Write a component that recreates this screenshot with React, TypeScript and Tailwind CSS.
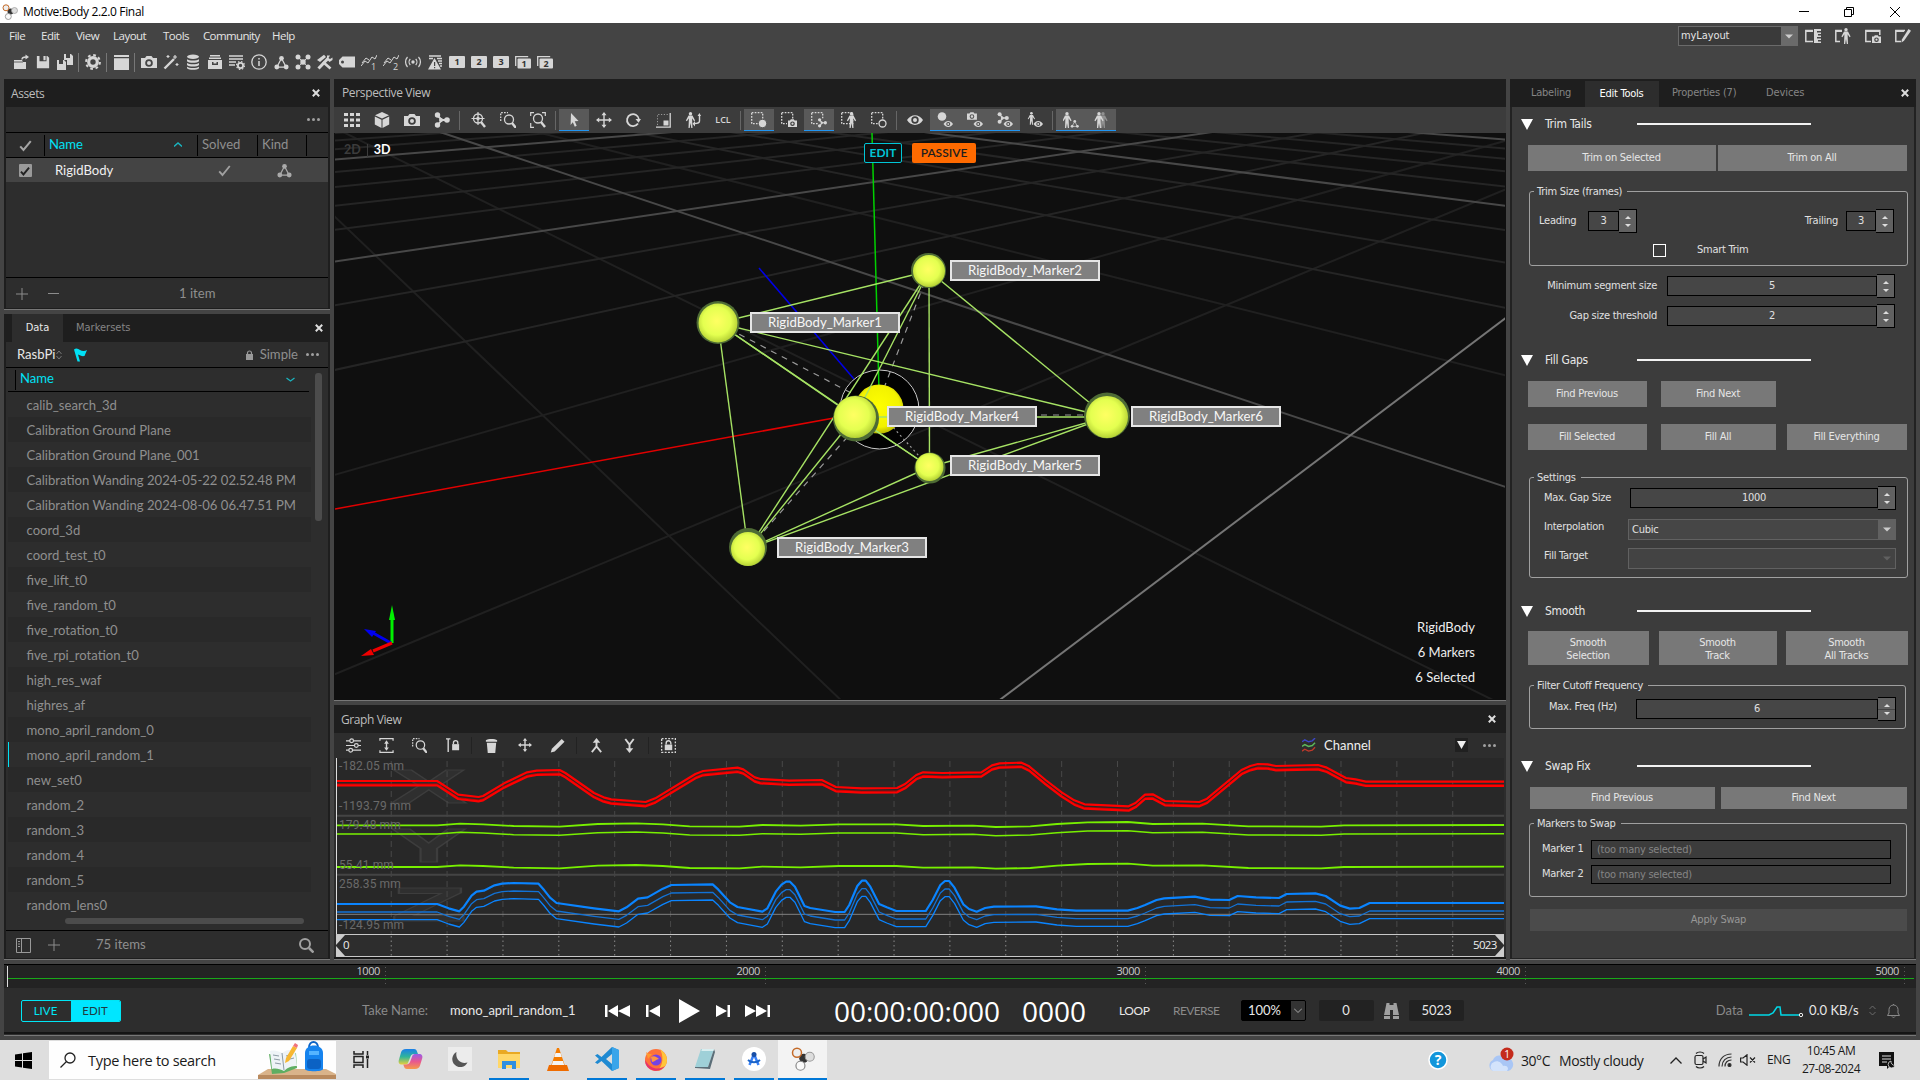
import React from "react";

type Kids = { children?: React.ReactNode };

/* ---------- small helpers ---------- */

function Ic({ children, s = 16, className = "" }: Kids & { s?: number; className?: string }) {
  return (
    <svg width={s} height={s} viewBox="0 0 16 16" fill="none" stroke="none" className={"shrink-0 " + className}>
      {children}
    </svg>
  );
}

const C = "#d6d6d6";

const camera = <path fillRule="evenodd" fill={C} d="M0 4h4l1.5-2h5L12 4h4v10H0zM8 5.2a3.8 3.8 0 1 0 0 7.6 3.8 3.8 0 0 0 0-7.6zm0 1.8a2 2 0 1 1 0 4 2 2 0 0 1 0-4z" />;
const smallCam = <path fillRule="evenodd" fill={C} d="M7 8.500h2l.8-1.200h3L13.600 8.500H16V15H7zM11.500 9.400a2.300 2.300 0 1 0 0 4.600 2.300 2.300 0 0 0 0-4.600zm0 1.200a1.100 1.100 0 1 1 0 2.200 1.100 1.100 0 0 1 0-2.200z" />;
const eyeSm = (
  <g>
    <path fill={C} d="M6.500 12c2.500-4 7-4 9.500 0-2.500 4-7 4-9.500 0z" />
    <circle cx="11.250" cy="12" r="2" fill="#4a4a4a" />
    <circle cx="11.250" cy="12" r="1" fill={C} />
  </g>
);
const man = (
  <g fill={C}>
    <circle cx="8" cy="1.700" r="1.700" />
    <path d="M6 3.600h4l2.600 5-1 .6-2-3 .4 9.800H8.800L8 11l-.8 5H6l.4-9.800-2 3-1-.6z" />
  </g>
);
const dashBox = <path d="M.7.700h11v11h-11z" stroke={C} strokeWidth="1.300" strokeDasharray="1.700 1.300" />;
const rigid = (
  <g>
    <path d="M8 3.500 3 13h10z" stroke={C} strokeWidth="1.300" />
    <circle cx="8" cy="3.500" r="2.500" fill={C} />
    <circle cx="3" cy="12.800" r="2.600" fill={C} />
    <circle cx="13" cy="12.800" r="2.600" fill={C} />
  </g>
);
const pair = (
  <g fill={C}>
    <path d="M3 3l5 5-4.500 5M8 8h5" stroke={C} strokeWidth="1.800" fill="none" />
    <circle cx="3.500" cy="3" r="2.700" />
    <circle cx="3.500" cy="13" r="2.700" />
    <circle cx="13" cy="8" r="2.800" />
    <circle cx="7" cy="8" r="2" />
  </g>
);
const gearPath = (
  <g>
    <circle cx="8" cy="8" r="4.300" stroke={C} strokeWidth="3.200" />
    <circle cx="8" cy="8" r="6.900" stroke={C} strokeWidth="2" strokeDasharray="2.710 2.710" />
  </g>
);

function NumIcon({ n, stack = false }: { n: string; stack?: boolean }) {
  return (
    <Ic>
      {stack && <path d="M.7 12V2.700h12.500" stroke={C} strokeWidth="1.300" />}
      <rect x={stack ? 2.500 : 0} y={stack ? 4.500 : 2} width={stack ? 13.500 : 16} height={stack ? 10 : 12} rx="1" fill={C} />
      <text x={stack ? 9.200 : 8} y={stack ? 12.800 : 11.300} textAnchor="middle" fontSize={9} fontWeight="700" fontFamily="Open Sans" fill="#333">{n}</text>
    </Ic>
  );
}

function Sep({ className = "bg-[#666]" }: { className?: string }) {
  return <div className={"mr-[3px] ml-[2px] h-[19px] w-px shrink-0 " + className} />;
}

function MainTool({ children }: Kids) {
  return <div className="flex w-[22px] shrink-0 items-center justify-center">{children}</div>;
}

function Close() {
  return (
    <svg width="8" height="8" viewBox="0 0 8 8" className="shrink-0">
      <path d="M.8.800l6.400 6.400M7.200.800.8 7.200" stroke="#ddd" strokeWidth="2" />
    </svg>
  );
}

function Dots() {
  return (
    <div className="flex gap-[2px]">
      <i className="size-[3px] rounded-full bg-[#a0a0a0]" />
      <i className="size-[3px] rounded-full bg-[#a0a0a0]" />
      <i className="size-[3px] rounded-full bg-[#a0a0a0]" />
    </div>
  );
}

/* ---------- window chrome ---------- */

function MotiveLogo({ s = 16 }: { s?: number }) {
  return (
    <svg width={s} height={s} viewBox="0 0 16 16">
      <circle cx="8.500" cy="7.500" r="3" fill="#333" />
      <circle cx="4" cy="3.800" r="3" fill="#eee" stroke="#c46a28" strokeWidth="1" />
      <circle cx="12.500" cy="6.500" r="3" fill="#ddd" stroke="#999" strokeWidth=".7" />
      <circle cx="6.300" cy="12.500" r="3" fill="#fafafa" stroke="#888" strokeWidth=".8" />
    </svg>
  );
}

function TitleBar() {
  return (
    <div className="flex h-[23px] shrink-0 items-center bg-white pl-[2px] text-black">
      <MotiveLogo />
      <span className="ml-[5px] text-[12px] tracking-[-0.35px]">Motive:Body 2.2.0 Final</span>
      <div className="ml-auto flex items-center pr-[20px]">
        <i className="mr-[35px] h-px w-[10px] bg-black" />
        <svg width="10" height="10" viewBox="0 0 10 10" fill="none" stroke="#000" className="mr-[36px]">
          <path d="M.5 2.500h7v7h-7zM2.500 2.500v-2h7v7h-2" />
        </svg>
        <svg width="10" height="10" viewBox="0 0 10 10" stroke="#000"><path d="M0 0l10 10M10 0L0 10" /></svg>
      </div>
    </div>
  );
}

function MenuBar() {
  return (
    <div className="flex h-[26px] shrink-0 items-center pl-[9px] text-[11.5px] tracking-[-0.5px] text-[#e4e4e4]">
      <span className="w-[32px]">File</span>
      <span className="w-[35px]">Edit</span>
      <span className="w-[37px]">View</span>
      <span className="w-[50px]">Layout</span>
      <span className="w-[40px]">Tools</span>
      <span className="w-[69px] tracking-[-0.62px]">Community</span>
      <span>Help</span>
      <div className="ml-auto flex items-center pr-[9px]">
        <div className="mr-[7px] flex h-5 w-[120px] items-center border border-[#6a6a6a] bg-[#3a3a3a] font-['DejaVu_Sans_Condensed','DejaVu_Sans',sans-serif] text-[11px] tracking-[-0.1px]">
          <span className="flex-1 pl-[2px]">myLayout</span>
          <div className="flex h-full w-4 items-center justify-center bg-[#6a6a6a]"><DownTri className="text-[#ccc]" /></div>
        </div>
        <Ic className="mr-[14px]"><path d="M8 2.500H.8v11H8M.8 3.200H8" stroke={C} strokeWidth="1.500" /><path fillRule="evenodd" fill={C} d="M9 1h7v2h-4v1.500h4v1.500h-3v1.500h3V9h-4v1.500h4V12h-3v1.500h3V15H9z" /></Ic>
        <Ic className="mr-[14px]"><path d="M7 2.500H.8v11H5M.8 3.200H7" stroke={C} strokeWidth="1.500" /><g transform="translate(3 0)">{man}</g></Ic>
        <Ic className="mr-[14px]"><path d="M6 13.500H.8v-11h14V7M.8 3.200h14" stroke={C} strokeWidth="1.500" />{smallCam}</Ic>
        <Ic><path d="M6 13.500H.8v-11H10M.8 3.200H9" stroke={C} strokeWidth="1.500" /><path fill={C} d="M13.500 1l2.500 1.800-7 10L6.500 14.500l.4-3z" /></Ic>
      </div>
    </div>
  );
}

function MainToolbar() {
  return (
    <div className="flex h-[26px] shrink-0 items-center pl-[10px]">
      <MainTool><Ic><path fill={C} d="M1 6h8l1 2h3v7H1z" /><path d="M9 5.500c0-2 2-2.500 4-2.500" stroke={C} strokeWidth="1.400" /><path fill={C} d="M12.500.500 16 3l-3.500 2.500z" /><path d="M1 8h9" stroke="#444" strokeWidth=".8" /></Ic></MainTool>
      <MainTool><Ic s={14}><path fillRule="evenodd" fill={C} d="M1 1h3v6h8V1h1l2 2v12H1zM8.500 1h2.500v5H8.500z" /></Ic></MainTool>
      <MainTool><Ic><path fillRule="evenodd" fill={C} d="M7 0h2v4h4V0h1l2 2v9H10V6H7zM0 6h2v4h4V6h1l2 2v8H0z" /></Ic></MainTool>
      <Sep className="bg-[#777]" />
      <MainTool><Ic>{gearPath}</Ic></MainTool>
      <Sep className="bg-[#777]" />
      <MainTool><Ic s={15}><path fill={C} d="M0 0h16v2H0zM0 3.500h16V16H0z" /></Ic></MainTool>
      <Sep className="bg-[#777]" />
      <MainTool><Ic>{camera}</Ic></MainTool>
      <MainTool><Ic><path d="M1.500 14.500 11 5" stroke={C} strokeWidth="2.400" /><path d="M12 1v4M10 3h4M5 1v3M3.500 2.500h3M14 9v3M12.500 10.500h3" stroke={C} strokeWidth="1.200" /></Ic></MainTool>
      <MainTool><Ic><g fill={C}><ellipse cx="8" cy="2.700" rx="6" ry="2.200" /><path d="M2 5.200c2 1.800 10 1.800 12 0v2c-2 2-10 2-12 0zM2 9c2 1.800 10 1.800 12 0v2c-2 2-10 2-12 0zM2 12.700c2 1.800 10 1.800 12 0v1.500c-2 2-10 2-12 0z" /></g></Ic></MainTool>
      <MainTool><Ic><path fillRule="evenodd" fill={C} d="M3 1h10v1.500H3zM2 3.500h12V5H2zM1 6h14v9H1zM5 8v3h6V8H9.500v1.500h-3V8z" /></Ic></MainTool>
      <MainTool><Ic><path d="M0 2h14M0 5h14M0 8h7M0 11h6" stroke={C} strokeWidth="1.500" /><circle cx="11.500" cy="11.500" r="2.600" stroke={C} strokeWidth="1.800" /><circle cx="11.500" cy="11.500" r="4" stroke={C} strokeWidth="1.200" strokeDasharray="1.500 1.640" /></Ic></MainTool>
      <MainTool><Ic><circle cx="8" cy="8" r="7.200" stroke={C} strokeWidth="1.300" /><path d="M8 7v5M8 4v1.600" stroke={C} strokeWidth="1.500" /></Ic></MainTool>
      <MainTool><Ic s={15}>{rigid}</Ic></MainTool>
      <MainTool><Ic><g fill={C}><circle cx="3" cy="3" r="2.500" /><circle cx="13" cy="3" r="2.500" /><circle cx="3" cy="13" r="2.500" /><circle cx="13" cy="13" r="2.500" /><circle cx="8" cy="8" r="2.700" /></g><path d="M3 3l10 10M13 3 3 13" stroke={C} strokeWidth="1.200" strokeDasharray="2 1" /></Ic></MainTool>
      <MainTool><Ic><path d="M1.500 14.500 11 4.500" stroke={C} strokeWidth="3" /><path d="M6 8l7.500 6.500" stroke={C} strokeWidth="2.600" /><path d="M0 6 7 .8 9 3 3 8z" fill={C} /><path d="M10 5.500V1.500h3L11.500 4l1.500 1 2.500-1.500V6l-3 2z" fill={C} /></Ic></MainTool>
      <MainTool><Ic><path fillRule="evenodd" fill={C} d="M3.500 2.500H16v11H3.500L0 10V6zM3.500 6.500a1.500 1.500 0 1 0 0 3 1.500 1.500 0 0 0 0-3z" /></Ic></MainTool>
      <MainTool><Ic><path d="M0 12 4 7l3 2 4-6 3 2 2-4M1 9l4-5 3 2" stroke={C} strokeWidth="1" /><text x="10" y="15.500" fontSize="9" fontFamily="Open Sans" fill={C}>1</text></Ic></MainTool>
      <MainTool><Ic><path d="M0 12 4 7l3 2 4-6 3 2 2-4M1 9l4-5 3 2" stroke={C} strokeWidth="1" /><text x="10" y="15.500" fontSize="9" fontFamily="Open Sans" fill={C}>2</text></Ic></MainTool>
      <MainTool><Ic><circle cx="8" cy="8" r="1.700" fill={C} /><path d="M5.300 5a4.300 4.300 0 0 0 0 6M10.700 5a4.300 4.300 0 0 1 0 6M2.500 3a7.500 7.500 0 0 0 0 10M13.500 3a7.500 7.500 0 0 1 0 10" stroke={C} strokeWidth="1.200" /></Ic></MainTool>
      <MainTool><Ic><path d="M2 2h12M2 4.500h4M10 4.500h5M11 7h4M12 9.500h3M13 12h2" stroke={C} strokeWidth="1.300" /><path fillRule="evenodd" fill={C} d="M7.500 4 14 15.500H1zM7 8h1.200v4H7zM7 13h1.200v1.200H7z" /></Ic></MainTool>
      <MainTool><NumIcon n="1" /></MainTool>
      <MainTool><NumIcon n="2" /></MainTool>
      <MainTool><NumIcon n="3" /></MainTool>
      <MainTool><NumIcon n="1" stack /></MainTool>
      <MainTool><NumIcon n="2" stack /></MainTool>
    </div>
  );
}

/* ---------- left column ---------- */

function AssetsPanel() {
  return (
    <section className="flex h-[231px] flex-col border-b border-[#777] bg-[#2d2d2d] text-[#8f8f8f]">
      <header className="flex h-[28px] items-center justify-between bg-[#1e1e1e] pr-[10px] pl-[7px] text-[12px] text-[#bdbdbd]">
        <span className="pt-[2px] tracking-[-0.4px]">Assets</span>
        <Close />
      </header>
      <div className="flex flex-1 flex-col border-x-2 border-b border-[#1e1e1e]">
        <div className="flex h-[26px] items-center justify-end border-b border-black pr-[8px]"><Dots /></div>
        <div className="flex h-[25px] items-center border-b border-black font-['Lato',sans-serif] text-[13.1px]">
          <div className="flex w-[38px] items-center justify-center pt-px"><Ic s={13}><path d="M1.500 9l4 4.500L14.500 2.500" stroke="#a5a5a5" strokeWidth="2.500" /></Ic></div>
          <div className="flex h-[21px] flex-1 items-center justify-between border-l border-black pr-[15px] pb-px pl-[4px]">
            <span className="text-[#00e1f5]">Name</span>
            <svg width="8" height="5" viewBox="0 0 8 5" fill="none" stroke="#1ab4bf" strokeWidth="1.400"><path d="M0 4.500 4 1l4 3.500" /></svg>
          </div>
          <span className="flex h-[21px] w-[60px] items-center border-l border-black pb-px pl-[4px]">Solved</span>
          <span className="flex h-[21px] w-[49px] items-center border-l border-black pb-px pl-[4px]">Kind</span>
          <span className="h-[21px] w-[22px] border-l border-black" />
        </div>
        <div className="flex h-[24px] items-center bg-[#444] pt-px">
          <div className="flex w-[38px] justify-center"><div className="flex size-[13px] items-center justify-center rounded-[1px] bg-[#9a9a9a]"><Ic s={10}><path d="M1.500 9l4 4.500L14.500 2.500" stroke="#222" strokeWidth="3" /></Ic></div></div>
          <span className="w-[153px] pl-[11px] font-['Lato',sans-serif] text-[13.1px] text-[#f0f0f0]">RigidBody</span>
          <div className="flex w-[54px] justify-center"><Ic s={13}><path d="M1.500 9l4 4.500L14.500 2.500" stroke="#a0a0a0" strokeWidth="2.300" /></Ic></div>
          <div className="ml-[10px] flex w-[46px] justify-center opacity-70"><Ic s={15}>{rigid}</Ic></div>
        </div>
        <div className="flex-1" />
        <footer className="flex h-[31px] items-center border-t border-black pt-px pl-[10px] font-['Lato',sans-serif] text-[13.1px]">
          <svg width="12" height="12" viewBox="0 0 12 12" stroke="#8c8c8c"><path d="M6 0v12M0 6h12" /></svg>
          <i className="ml-[20px] h-px w-[11px] bg-[#8c8c8c]" />
          <span className="ml-[120px]">1 item</span>
        </footer>
      </div>
    </section>
  );
}

const takes = [
  "calib_search_3d", "Calibration Ground Plane", "Calibration Ground Plane_001",
  "Calibration Wanding 2024-05-22 02.52.48 PM", "Calibration Wanding 2024-08-06 06.47.51 PM",
  "coord_3d", "coord_test_t0", "five_lift_t0", "five_random_t0", "five_rotation_t0", "five_rpi_rotation_t0",
  "high_res_waf", "highres_af", "mono_april_random_0", "mono_april_random_1", "new_set0",
  "random_2", "random_3", "random_4", "random_5", "random_lens0",
];

function DataPanel() {
  return (
    <section className="mt-1 flex h-[646px] flex-col border-b border-[#777] bg-[#2d2d2d] font-['Lato',sans-serif] text-[13.1px] text-[#8f8f8f]">
      <header className="flex h-[28px] items-center bg-[#1e1e1e] pr-[7px] pl-[8px] font-['DejaVu_Sans_Condensed','DejaVu_Sans',sans-serif] text-[11px]">
        <span className="flex h-full w-[51px] items-center justify-center bg-[#2d2d2d] pt-px text-[#e8e8e8]">Data</span>
        <span className="ml-[13px] flex-1 pt-px text-[#858585]">Markersets</span>
        <Close />
      </header>
      <div className="flex flex-1 flex-col border-x-2 border-b border-[#1e1e1e]">
        <div className="flex h-[26px] items-center border-b border-black pr-[9px] pl-[11px]">
          <span className="w-[39px] text-[#e8e8e8]">RasbPi</span>
          <svg width="6" height="10" viewBox="0 0 6 10" fill="none" stroke="#777"><path d="M.5 4 3 1l2.500 3M.5 6 3 9l2.500-3" /></svg>
          <svg width="13" height="14" viewBox="0 0 13 14" className="ml-[12px] flex-none" fill="#00e1f5"><path d="M0 1.500C2 0 4 .5 6 2 8 3.200 11 3.200 13 2l-2.500 6C8 8.500 6 7.500 4 6.500L6 13.500H3.500z" /></svg>
          <svg width="7" height="10" viewBox="0 0 7 10" className="ml-auto"><path d="M1.500 4.500V3a2 2 0 0 1 4 0v1.500" fill="none" stroke="#999" strokeWidth="1.200" /><rect y="4" width="7" height="6" fill="#999" /></svg>
          <span className="mr-[8px] ml-[7px]">Simple</span>
          <Dots />
        </div>
        <div className="relative flex flex-1 flex-col">
          <div className="mx-[2px] flex h-[24px] w-[301px] items-center justify-between border-b border-black pr-[14px]">
            <span className="ml-[7px] flex h-[20px] items-center border-l border-black pb-[2px] pl-[4px] text-[#00e1f5]">Name</span>
            <svg width="9" height="5" viewBox="0 0 9 5" fill="none" stroke="#1ab4bf" strokeWidth="1.300"><path d="M.5 1l4 3 4-3" /></svg>
          </div>
          {takes.map((t, i) => (
            <div
              key={t}
              className={
                "mr-[17px] ml-[2px] flex h-[25px] items-center border-l pt-[2px] pl-[17.500px] whitespace-nowrap " +
                (i % 2 ? "bg-[#292929] " : "") +
                (t === "mono_april_random_1" ? "border-[#00e1f5]" : "border-transparent")
              }
            >
              {t}
            </div>
          ))}
          <div className="absolute top-[5px] right-[6px] h-[148px] w-[7px] rounded-[3px] bg-[#4c4c4c]" />
          <div className="absolute bottom-[6px] left-[59px] h-[6px] w-[239px] rounded-[3px] bg-[#4c4c4c]" />
        </div>
        <footer className="flex h-[28px] items-center border-t border-black pt-px pr-[14px] pl-[10px]">
          <svg width="15" height="15" viewBox="0 0 15 15" fill="none" stroke="#999"><path d="M.5.500h14v14H.500zM5.500.500v14" /><path d="M2 3.500h2M2 6h2M2 8.500h2" /></svg>
          <svg width="12" height="12" viewBox="0 0 12 12" stroke="#8c8c8c" className="ml-[17px]"><path d="M6 0v12M0 6h12" /></svg>
          <span className="ml-[36px] flex-1">75 items</span>
          <svg width="15" height="15" viewBox="0 0 15 15" fill="none" stroke="#a0a0a0" strokeWidth="2"><circle cx="6" cy="6" r="5" /><path d="M10 10l4.500 4.500" strokeWidth="2.500" /></svg>
        </footer>
      </div>
    </section>
  );
}

/* ---------- perspective view ---------- */

function VTool({ on = false, w = "w-[30px]", children }: Kids & { on?: boolean; w?: string }) {
  return (
    <div className={"flex h-[22px] shrink-0 items-center justify-center border-b " + w + (on ? " border-[#2196f3] bg-[#595959]" : " border-transparent")}>
      {children}
    </div>
  );
}

const lens = <g><circle cx="8" cy="6.500" r="4.500" stroke={C} strokeWidth="1.300" /><path d="M11 10l4 5" stroke={C} strokeWidth="2.400" /></g>;

function ViewToolbar() {
  return (
    <div className="flex h-[26px] items-center bg-[#3c3c3c] pl-[3px]">
      <VTool><Ic><path stroke={C} strokeWidth="3.200" strokeDasharray="4 2" d="M0 2.500h16M0 8h16M0 13.500h16" /></Ic></VTool>
      <VTool><Ic><path fill={C} d="M8 0l7 3.200-7 3.300-7-3.300zM.8 4.500l6.700 3.200V16L.8 12.500zM15.200 4.500 8.500 7.700V16l6.700-3.500z" /></Ic></VTool>
      <VTool><Ic>{camera}</Ic></VTool>
      <VTool><Ic>{pair}</Ic></VTool>
      <Sep />
      <VTool><Ic>{lens}<path d="M8 0v13M1.500 6.500h13" stroke={C} strokeWidth="1.200" /><circle cx="8" cy="6.500" r="1.800" fill={C} /></Ic></VTool>
      <VTool><Ic><path d="M.7 9V.7H8" stroke={C} strokeWidth="1.300" strokeDasharray="1.700 1.200" /><g transform="translate(1 1)">{lens}</g></Ic></VTool>
      <VTool><Ic><path d="M.7 4V.7H4M12 .7h3.300V4M.7 11v4.300H4" stroke={C} strokeWidth="1.200" />{lens}</Ic></VTool>
      <Sep />
      <VTool on><Ic><path fill={C} d="M5 1l7.500 8-3.800.3 2 4.500-1.900.9-2-4.500L4.600 13z" /></Ic></VTool>
      <VTool w="w-[29px]"><Ic><path d="M8 1.500v13M1.500 8h13" stroke={C} strokeWidth="1.400" /><path fill={C} d="M8 0l2.500 3.200h-5zM8 16l2.500-3.200h-5zM0 8l3.200-2.500v5zM16 8l-3.200-2.500v5z" /></Ic></VTool>
      <VTool><Ic><path d="M13 11.500A6 6 0 1 1 14 7.500" stroke={C} strokeWidth="1.800" /><path fill={C} d="M10.500 7H16l-2.500 3.800z" /></Ic></VTool>
      <VTool><Ic><path d="M1 15.200h14.200V1" stroke={C} strokeWidth="1.300" /><path fill={C} d="M8.500 8.500h5v5h-5z" /><path d="M2.500 13V2.500H13" stroke={C} strokeWidth="1" strokeDasharray="1.200 1.600" opacity=".6" /></Ic></VTool>
      <VTool><Ic><g transform="translate(-2.500 0)">{man}</g><path d="M14.500 3v6c0 2-3 2.500-5 2.500" stroke={C} strokeWidth="1.400" /><path fill={C} d="M10 9v5.500L7.500 11.700zM12.500 4l2-3 1.500 3z" /></Ic></VTool>
      <VTool><span className="text-[9px] font-semibold text-[#d6d6d6]">LCL</span></VTool>
      <Sep />
      <VTool on><Ic>{dashBox}<circle cx="11.500" cy="11.500" r="4.200" fill={C} stroke="#595959" /></Ic></VTool>
      <VTool><Ic>{dashBox}<path d="M6 7h10v9H6z" fill="#3c3c3c" />{smallCam}</Ic></VTool>
      <VTool on><Ic>{dashBox}<path d="M7 6.500h8v9H7z" fill="#595959" /><g transform="translate(6.500 6) scale(.6)">{pair}</g></Ic></VTool>
      <VTool><Ic>{dashBox}<g transform="translate(2.500 0)">{man}</g></Ic></VTool>
      <VTool><Ic>{dashBox}<circle cx="11.500" cy="11.500" r="3.500" fill="#3c3c3c" stroke={C} strokeWidth="1.300" /></Ic></VTool>
      <Sep />
      <VTool><Ic><path fillRule="evenodd" fill={C} d="M0 8c4-6.500 12-6.500 16 0-4 6.500-12 6.500-16 0zM8 4.300a3.700 3.700 0 1 0 0 7.400 3.700 3.700 0 0 0 0-7.400z" /><circle cx="8" cy="8" r="2" fill={C} /></Ic></VTool>
      <VTool on><Ic><circle cx="5" cy="4.500" r="4.300" fill={C} />{eyeSm}</Ic></VTool>
      <VTool on><Ic><g transform="translate(0 -1) scale(.62)">{camera}</g>{eyeSm}</Ic></VTool>
      <VTool on><Ic><g transform="scale(.75)">{pair}</g>{eyeSm}</Ic></VTool>
      <VTool><Ic><g transform="translate(-2 0) scale(.8)">{man}</g>{eyeSm}</Ic></VTool>
      <Sep />
      <VTool on><Ic><g transform="translate(-4 0)">{man}</g><g transform="translate(7.500 7.500) scale(.53)">{rigid}</g></Ic></VTool>
      <VTool on><Ic><g transform="translate(-2 0)">{man}</g><g transform="translate(2 0)" opacity=".45">{man}</g></Ic></VTool>
    </div>
  );
}

/* Ground-plane projection: both line families converge on the horizon. */
const V1 = { x: 142.6, y: 33, k: -0.1115 };
const V2 = { x: 1883, y: 33, k: 0.1 };
const O = { x: 677, y: 211 };

function project(u: number, v: number) {
  const w = 1 + V1.k * u + V2.k * v;
  return {
    x: (O.x + V1.k * u * V1.x + V2.k * v * V2.x) / w,
    y: (O.y + V1.k * u * V1.y + V2.k * v * V2.y) / w,
  };
}

function floorLines() {
  const out: { x1: number; y1: number; x2: number; y2: number; c: string; w: number }[] = [];
  for (let u = -9; u <= 5; u++) {
    const p = project(u, 0);
    const c = u === 5 ? "#757575" : u % 5 === 0 ? "#484848" : u > 2 ? "#202020" : "#252525";
    out.push({ x1: V2.x, y1: V2.y, x2: V2.x + (p.x - V2.x) * 4, y2: V2.y + (p.y - V2.y) * 4, c, w: 2 });
  }
  for (let v = -2; v <= 12; v++) {
    const p = project(0, v);
    const c = v % 5 === 0 ? "#484848" : v < 2 ? "#202020" : "#252525";
    out.push({ x1: V1.x, y1: V1.y, x2: V1.x + (p.x - V1.x) * 5, y2: V1.y + (p.y - V1.y) * 5, c, w: 2 });
  }
  return out.sort((a, b) => (a.c < b.c ? -1 : 1));
}

const markers = [
  { n: 1, x: 718, y: 323, r: 19.5, hx: 718, hy: 322.5, hr: 21.5 },
  { n: 2, x: 929, y: 271, r: 16, hx: 928.5, hy: 270.5, hr: 17.5 },
  { n: 3, x: 748, y: 549, r: 17, hx: 748, hy: 547, hr: 19 },
  { n: 5, x: 929.5, y: 467, r: 14, hx: 930, hy: 468, hr: 15.5 },
  { n: 6, x: 1107, y: 417, r: 21, hx: 1107, hy: 415.5, hr: 23 },
  { n: 4, x: 855, y: 417, r: 21, hx: 856, hy: 418.5, hr: 23 },
];
const edges: [number, number][] = [
  [1, 2], [1, 6], [1, 3], [1, 4], [1, 5], [2, 3], [2, 4], [2, 5], [2, 6], [3, 4], [3, 5], [3, 6], [4, 6], [4, 5], [5, 6],
];
const at = (n: number) => markers.find((m) => m.n === n)!;

function Scene() {
  return (
    <svg width="1170" height="566" viewBox="335 133 1170 566" className="block">
      <defs>
        <radialGradient id="ball" cx=".47" cy=".45" r=".6">
          <stop offset="0" stopColor="#ffff62" />
          <stop offset=".6" stopColor="#e4ff50" />
          <stop offset="1" stopColor="#a9c62e" />
        </radialGradient>
        <radialGradient id="pivot" cx=".5" cy=".45" r=".6">
          <stop offset="0" stopColor="#ffff00" />
          <stop offset=".7" stopColor="#f2f200" />
          <stop offset="1" stopColor="#a0a000" />
        </radialGradient>
      </defs>
      {floorLines().map((l, i) => (
        <line key={i} x1={l.x1} y1={l.y1} x2={l.x2} y2={l.y2} stroke={l.c} strokeWidth={l.w} />
      ))}
      <path d="M759 268 854 379" stroke="#0000e6" strokeWidth="1.500" />
      <path d="M335 509 845 416" stroke="#e00000" strokeWidth="1.500" />
      <circle cx="879.500" cy="409.500" r="39.500" fill="#020202" stroke="#c8c8c8" strokeWidth="1" />
      <path d="M872 133 879 390" stroke="#00d000" strokeWidth="1.500" />
      <g stroke="#9a9a9a" strokeWidth="1.200" strokeDasharray="6 6">
        <path d="M718 323 855 395M929 271 884 388M748 549 858 425M1107 415H1037" />
        <path d="M890 424 929 467" strokeDasharray="2 3" />
      </g>
      <circle cx="879" cy="409" r="24.500" fill="url(#pivot)" />
      <g stroke="#a6e264" strokeWidth="1.400">
        {edges.map(([a, b]) => (
          <line key={a + "-" + b} x1={at(a).x} y1={at(a).y} x2={at(b).x} y2={at(b).y} />
        ))}
      </g>
      {markers.map((m) => (
        <g key={m.n}>
          <circle cx={m.hx} cy={m.hy} r={m.hr} fill="#4e6b35" />
          <circle cx={m.x} cy={m.y} r={m.r} fill="url(#ball)" />
        </g>
      ))}
      <g strokeWidth="3">
        <path d="M392 643V617" stroke="#00f000" />
        <path d="M392 605l3 15h-6z" fill="#00f000" />
        <path d="M391 643l-18-10" stroke="#0000f0" />
        <path d="M364 629l12 2-4 6z" fill="#0000f0" />
        <path d="M392 643l-19 8" stroke="#f00000" />
        <path d="M361 656l10-7 3 6z" fill="#f00000" />
      </g>
    </svg>
  );
}

function Tag({ n, className }: { n: number; className: string }) {
  return (
    <div className={"absolute flex h-[21px] w-[150px] items-center justify-center border-2 border-[#e6e6e6] bg-[#808080] text-[13.200px] text-[#f6f6f6] " + className}>
      RigidBody_Marker{n}
    </div>
  );
}

function PerspectiveView() {
  return (
    <section className="flex h-[622px] flex-col border-b border-[#777] bg-[#0f0f0f]">
      <header className="flex h-[28px] items-center bg-[#1e1e1e] pl-[8px] text-[12px] tracking-[-0.35px] text-[#bdbdbd]">Perspective View</header>
      <ViewToolbar />
      <div className="relative mx-px h-[567px] overflow-hidden bg-[#0f0f0f] font-['Lato',sans-serif]">
        <Scene />
        <div className="absolute top-[8px] left-[9px] flex items-center text-[12.500px] font-bold">
          <span className="text-[#3c3c3c]">2D</span>
          <i className="mx-[6px] h-[13px] w-px bg-[#3c3c3c]" />
          <span className="text-white">3D</span>
        </div>
        <div className="absolute top-[10px] left-[529px] flex h-5 w-[38px] items-center justify-center rounded-[2px] border border-[#00c5d6] bg-[#0f0f0f] text-[12px] font-bold text-[#00c5d6]">EDIT</div>
        <div className="absolute top-[10px] left-[577px] flex h-5 w-[64px] items-center justify-center rounded-[2px] bg-[#ff6a00] text-[12px] font-semibold text-[#1e1e1e]">PASSIVE</div>
        <Tag n={1} className="top-[179px] left-[415px]" />
        <Tag n={2} className="top-[127px] left-[615px]" />
        <Tag n={3} className="top-[404px] left-[442px]" />
        <Tag n={4} className="top-[273px] left-[552px]" />
        <Tag n={5} className="top-[322px] left-[615px]" />
        <Tag n={6} className="top-[273px] left-[796px]" />
        <div className="absolute right-[30px] bottom-[10px] text-right text-[13px] leading-[25px] text-[#eee]">
          <div>RigidBody</div>
          <div>6 Markers</div>
          <div>6 Selected</div>
        </div>
      </div>
    </section>
  );
}

/* ---------- graph view ---------- */

const red: [number, number][] = [
  [18, 243], [280, 243], [335, 284], [388, 291], [400, 288], [455, 250], [515, 217], [540, 212], [600, 210], [615, 219], [690, 279], [715, 292], [735, 298], [825, 306], [850, 295], [955, 222], [975, 213], [1065, 203], [1080, 208], [1110, 232], [1125, 237], [1200, 242], [1285, 240], [1322, 261], [1390, 265], [1482, 264], [1503, 252], [1532, 225], [1550, 217], [1600, 219], [1702, 217], [1730, 196], [1750, 190], [1807, 188], [1827, 199], [1870, 240], [1912, 277], [1945, 301], [1972, 313], [2087, 319], [2105, 309], [2130, 284], [2150, 283], [2182, 303], [2272, 306], [2292, 296], [2382, 210], [2405, 198], [2425, 192], [2450, 193], [2472, 198], [2582, 195], [2605, 203], [2655, 234], [2680, 238], [2707, 245], [3068, 245],
];
const blue: [number, number][] = [
  [18, 612], [280, 612], [310, 625], [338, 634], [350, 620], [370, 587], [383, 575], [402, 572], [430, 556], [450, 551], [480, 549], [545, 551], [560, 571], [575, 593], [592, 609], [690, 625], [755, 634], [775, 622], [805, 596], [830, 592], [870, 566], [892, 555], [1000, 553], [1015, 569], [1045, 607], [1065, 621], [1130, 635], [1143, 625], [1165, 575], [1180, 554], [1192, 545], [1202, 545], [1215, 560], [1240, 618], [1255, 624], [1320, 636], [1345, 636], [1357, 615], [1378, 558], [1390, 542], [1400, 542], [1412, 560], [1435, 612], [1455, 622], [1480, 633], [1557, 633], [1575, 600], [1595, 555], [1607, 543], [1618, 543], [1632, 563], [1655, 613], [1670, 627], [1690, 635], [1712, 624], [1735, 620], [1845, 619], [1900, 628], [1950, 632], [2085, 632], [2110, 624], [2130, 615], [2160, 600], [2180, 595], [2260, 590], [2300, 599], [2350, 600], [2372, 588], [2420, 592], [2480, 594], [2500, 582], [2575, 580], [2602, 588], [2640, 617], [2665, 626], [2690, 624], [2717, 609], [3068, 609],
];
const green: [number, number][] = [
  [18, 376], [280, 376], [340, 371], [400, 373], [480, 378], [600, 380], [700, 372], [800, 370], [870, 373], [940, 379], [1070, 380], [1130, 375], [1230, 377], [1330, 373], [1480, 373], [1550, 378], [1680, 377], [1740, 381], [1830, 379], [1900, 372], [1980, 367], [2085, 366], [2150, 372], [2280, 371], [2400, 379], [2590, 380], [2650, 376], [3068, 375],
];

const line = (pts: [number, number][], dy: number) => pts.map(([x, y]) => x + "," + (y + dy)).join(" ");

function Trace({ pts, dy, c, w = 2 }: { pts: [number, number][]; dy: number; c: string; w?: number }) {
  return <polyline points={line(pts, dy)} fill="none" stroke={c} strokeWidth={w} strokeLinejoin="round" vectorEffect="non-scaling-stroke" />;
}

const ticks = Array.from({ length: 20 }, (_, k) => 160 + k * 146);

function Watermark({ ch, y }: { ch: string; y: number }) {
  return (
    <text x="158" y={y} fontSize="143" fontFamily="Liberation Sans" fontWeight="700" textLength="200" lengthAdjust="spacingAndGlyphs" fill="#2f2f2f" stroke="#3d3d3d" strokeWidth="1" vectorEffect="non-scaling-stroke">
      {ch}
    </text>
  );
}

function RangeLabel({ className, children }: Kids & { className: string }) {
  return <div className={"absolute left-[2px] text-[12px] leading-[12px] tracking-[0.1px] text-[#6a6a6a] " + className}>{children}</div>;
}

function GTool({ children }: Kids) {
  return <div className="flex w-[33px] shrink-0 items-center justify-center">{children}</div>;
}

function GraphView() {
  return (
    <section className="mt-1 flex h-[255px] flex-col border-b border-[#777] bg-[#2d2d2d]">
      <header className="flex h-[28px] items-center justify-between bg-[#1e1e1e] pr-[10px] pl-[7px] text-[12px] text-[#bdbdbd]">
        <span className="pt-[2px] tracking-[-0.4px]">Graph View</span>
        <Close />
      </header>
      <div className="flex h-[25px] items-center pr-[10px] pb-px pl-[3px]">
        <GTool><Ic s={15}><path d="M0 3h16M0 8h16M0 13h16" stroke={C} strokeWidth="1.300" /><g fill="#2d2d2d" stroke={C} strokeWidth="1.300"><circle cx="6" cy="3" r="2" /><circle cx="11" cy="8" r="2" /><circle cx="5" cy="13" r="2" /></g></Ic></GTool>
        <GTool><Ic s={15}><path d="M1 3V.7h14V3M1 13v2.300h14V13" stroke={C} strokeWidth="1.300" /><path d="M8 4v8" stroke={C} strokeWidth="1.500" /><path fill={C} d="M8 2.500l2.500 3.500h-5zM8 13.500l2.500-3.500h-5z" /></Ic></GTool>
        <GTool><Ic s={15}><path d="M.7 9V.7H8" stroke={C} strokeWidth="1.300" strokeDasharray="1.700 1.200" /><g transform="translate(1 1)">{lens}</g></Ic></GTool>
        <GTool><Ic s={14}><path d="M0 1h5M2.500 1v15" stroke={C} strokeWidth="1.600" /><path fill={C} d="M7 7h8v7H7z" /><path d="M8.500 7V5.500a2.500 2.500 0 0 1 5 0V7" stroke={C} strokeWidth="1.500" /></Ic></GTool>
        <i className="mr-[3px] ml-[2px] h-[17px] w-px bg-[#222]" />
        <GTool><Ic s={15}><path fill={C} d="M2 2.500C4 .5 12 .5 14 2.500v1.500H2zM3 5h10l-1 11H4z" /></Ic></GTool>
        <GTool><Ic s={14}><path d="M8 1.500v13M1.500 8h13" stroke={C} strokeWidth="1.600" /><path fill={C} d="M8 0l2.500 3.200h-5zM8 16l2.500-3.200h-5zM0 8l3.200-2.500v5zM16 8l-3.200-2.500v5z" /></Ic></GTool>
        <GTool><Ic s={15}><path fill={C} d="M12.500 1 15.500 4 5 14.500.8 15.500 2 11.500z" /></Ic></GTool>
        <i className="mr-[3px] ml-[2px] h-[17px] w-px bg-[#222]" />
        <GTool><Ic s={15}><path d="M8 3v6L3 15M8 9l5 6" stroke={C} strokeWidth="2" /><path fill={C} d="M8 0l4 5H4z" /></Ic></GTool>
        <GTool><Ic s={15}><path d="M8 12V7L3.500 1M8 7l4.500-6" stroke={C} strokeWidth="2" /><path fill={C} d="M8 16l4-5H4z" /></Ic></GTool>
        <i className="mr-[3px] ml-[2px] h-[17px] w-px bg-[#222]" />
        <GTool><Ic s={15}><path d="M.7.700h14.600v14.600H.7z" stroke={C} strokeWidth="1.400" strokeDasharray="2 1.500" /><path fill={C} d="M4 7h8v6H4z" /><path d="M5.500 7V5.500a2.500 2.500 0 0 1 5 0V7" stroke={C} strokeWidth="1.500" /></Ic></GTool>
        <div className="ml-auto flex items-center">
          <svg width="14" height="15" viewBox="0 0 15 16" fill="none" strokeWidth="1.500">
            <path d="M0 4l3-2 4 2 4-1 3-3" stroke="#3c46c8" /><path d="M0 9l3-2 4 2 4-1 3-3" stroke="#5cb85c" /><path d="M0 14l3-2 4 2 4-1 3-3" stroke="#c0392b" />
          </svg>
          <span className="ml-[8px] w-[131px] pt-[2px] font-['Lato',sans-serif] text-[13px] text-[#f0f0f0]">Channel</span>
          <div className="mr-[15px] flex h-[14px] w-[13px] items-center justify-center bg-[#202020]"><svg width="9" height="8" viewBox="0 0 9 8"><path d="M0 0h9L4.500 8z" fill="#eee" /></svg></div>
          <Dots />
        </div>
      </div>
      <div className="relative ml-[2px] h-[176px] w-[1168px] border-l border-[#ddd] bg-[#282828] font-['Roboto',sans-serif]">
        <svg width="1167" height="176" viewBox="18.300 174 3049.700 528" preserveAspectRatio="none" className="block">
          <Watermark ch="X" y={310} />
          <Watermark ch="Y" y={487} />
          <Watermark ch="Z" y={664} />
          {ticks.map((x) => (
            <path key={x} d={`M${x} 183V702`} stroke="#484848" strokeWidth="1" strokeDasharray="6 4" vectorEffect="non-scaling-stroke" />
          ))}
          <path d="M18 643H3068" stroke="#808080" strokeWidth="1" vectorEffect="non-scaling-stroke" />
          <Trace pts={red} dy={9} c="#c00000" w={1} />
          <Trace pts={red} dy={0} c="#ff0000" w={2.200} />
          <Trace pts={red} dy={13} c="#ff0000" w={2.200} />
          <Trace pts={green} dy={0} c="#78f000" w={1.800} />
          <Trace pts={green} dy={26} c="#78f000" w={1.500} />
          <Trace pts={green} dy={125} c="#78f000" w={1.800} />
          <Trace pts={blue} dy={0} c="#0a84ff" w={2.200} />
          <Trace pts={blue} dy={24} c="#1272d6" w={1.300} />
          <Trace pts={blue} dy={47} c="#0a84ff" w={1.300} />
          <path d="M18 347.500H3068M18 524.500H3068" stroke="#444" strokeWidth="2" vectorEffect="non-scaling-stroke" />
        </svg>
        <RangeLabel className="top-[2px]">-182.05 mm</RangeLabel>
        <RangeLabel className="top-[42px]">-1193.79 mm</RangeLabel>
        <RangeLabel className="top-[61px]">179.48 mm</RangeLabel>
        <RangeLabel className="top-[101px]">55.41 mm</RangeLabel>
        <RangeLabel className="top-[120px]">258.35 mm</RangeLabel>
        <RangeLabel className="top-[161px]">-124.95 mm</RangeLabel>
      </div>
      <div className="ml-[2px] h-[23px] w-[1168px] border-y border-[#c8c8c8]">
        <svg width="1168" height="21" viewBox="0 0 1168 21" className="block font-['Open_Sans',sans-serif]">
          {ticks.map((x) => (
            <path key={x} d={`M${(x - 18.3) / 2.6133 + 1} 1V21`} stroke="#8a8a8a" strokeDasharray="1.500 3" />
          ))}
          <path d="M0 0h9L0 10zM0 21h9L0 11z" fill="#ccc" />
          <path d="M1168 0h-9l9 10zM1168 21h-9l9-10z" fill="#ccc" />
          <text x="7" y="14" fontSize="11.500" fill="#eee">0</text>
          <text x="1137" y="14" fontSize="11.500" letterSpacing="-.7" fill="#eee">5023</text>
        </svg>
      </div>
      <div className="flex-1 bg-[#161616]" />
    </section>
  );
}

/* ---------- edit tools ---------- */

function DownTri({ className = "" }: { className?: string }) {
  return <svg width="8" height="5" viewBox="0 0 8 5" className={className}><path d="M0 .500h8L4 4.500z" fill="currentColor" /></svg>;
}

function Heading({ children, className }: Kids & { className: string }) {
  return (
    <div className={"flex h-5 items-center pl-[9px] " + className}>
      <svg width="12" height="11" viewBox="0 0 12 11"><path d="M0 0h12L6 11z" fill="#fff" /></svg>
      <span className="ml-[12px] w-[92px] text-[12px] text-[#e8e8e8]">{children}</span>
      <i className="h-[2px] w-[174px] bg-[#f2f2f2]" />
    </div>
  );
}

function Btn({ children, className = "" }: Kids & { className?: string }) {
  return <button className={"flex items-center justify-center bg-[#787878] pt-px pr-px text-[#e6e6e6] " + className}>{children}</button>;
}

function Group({ title, children, className }: Kids & { title: string; className: string }) {
  return (
    <div className={"relative ml-[17px] rounded-[3px] border border-[#a0a0a0] " + className}>
      <span className="absolute top-[-7px] left-[4px] bg-[#3c3c3c] pr-[5px] pl-[3px] leading-[14px]">{title}</span>
      {children}
    </div>
  );
}

function Spin({ value, className, split = false }: { value: string; className: string; split?: boolean }) {
  return (
    <div className={"flex h-6 items-center " + className}>
      <div className="flex h-[20px] flex-1 items-center justify-center border border-black bg-[#464646] pt-px">{value}</div>
      <div className="flex h-full w-[18px] flex-col items-center justify-center gap-[5px] border-y border-r border-black bg-[#616161] text-[#ddd]">
        <svg width="6" height="3" viewBox="0 0 6 3"><path d="M3 0l3 3H0z" fill="currentColor" /></svg>
        {split && <i className="-my-[3px] h-px w-full bg-[#444]" />}
        <svg width="6" height="3" viewBox="0 0 6 3"><path d="M0 0h6L3 3z" fill="currentColor" /></svg>
      </div>
    </div>
  );
}

function EditTools() {
  return (
    <section className="flex w-[406px] flex-col border-b border-[#777] bg-[#3c3c3c] font-['DejaVu_Sans_Condensed','DejaVu_Sans',sans-serif] text-[11px] tracking-[-0.25px] text-[#e0e0e0]">
      <header className="flex h-[28px] shrink-0 items-center bg-[#1e1e1e] pr-[7px] text-[#858585]">
        <span className="w-[75px] pt-px pl-[21px]">Labeling</span>
        <span className="mt-[2px] flex h-[26px] w-[74px] items-center justify-center bg-[#2d2d2d] pr-px text-white">Edit Tools</span>
        <span className="w-[94px] pt-px pl-[13px] tracking-[-0.2px]">Properties (7)</span>
        <span className="flex-1 pt-px pl-[13px] tracking-[-0.1px]">Devices</span>
        <Close />
      </header>
      <div className="flex flex-1 flex-col border-x-2 border-b border-[#222]">
        <Heading className="mt-[7px]">Trim Tails</Heading>
        <div className="mt-[11px] ml-[16px] flex h-[26px] gap-[2px]">
          <Btn className="w-[188px]">Trim on Selected</Btn>
          <Btn className="w-[189px]">Trim on All</Btn>
        </div>
        <Group title="Trim Size (frames)" className="mt-[20px] h-[75px] w-[379px]">
          <div className="mt-[17px] flex h-6 items-center pl-[9px]">
            <span className="w-[49px]">Leading</span>
            <Spin value="3" className="w-[49px]" />
            <span className="mr-[8px] ml-auto">Trailing</span>
            <Spin value="3" className="mr-[13px] w-[48px]" />
          </div>
          <div className="mt-[9px] flex items-center pl-[123px]">
            <i className="size-[13px] border border-white" />
            <span className="ml-[31px]">Smart Trim</span>
          </div>
        </Group>
        <div className="mt-[8px] flex items-center">
          <span className="mr-[10px] w-[145px] text-right">Minimum segment size</span>
          <Spin value="5" className="w-[228px]" />
        </div>
        <div className="mt-[6px] flex items-center">
          <span className="mr-[10px] w-[145px] text-right">Gap size threshold</span>
          <Spin value="2" className="w-[228px]" />
        </div>
        <Heading className="mt-[22px]">Fill Gaps</Heading>
        <div className="mt-[11px] ml-[16px] flex h-[26px]">
          <Btn className="w-[119px]">Find Previous</Btn>
          <Btn className="ml-[14px] w-[115px]">Find Next</Btn>
        </div>
        <div className="mt-[17px] ml-[16px] flex h-[26px]">
          <Btn className="w-[119px]">Fill Selected</Btn>
          <Btn className="ml-[14px] w-[115px]">Fill All</Btn>
          <Btn className="ml-[11px] w-[120px]">Fill Everything</Btn>
        </div>
        <Group title="Settings" className="mt-[27px] h-[101px] w-[379px]">
          <div className="mt-[8px] flex items-center pl-[14px]">
            <span className="w-[86px]">Max. Gap Size</span>
            <Spin value="1000" className="w-[266px]" />
          </div>
          <div className="mt-[9px] flex h-[21px] items-center pl-[14px]">
            <span className="w-[84px] pb-[4px]">Interpolation</span>
            <div className="flex h-[21px] w-[268px] items-center border border-[#616161] bg-[#464646] pl-[3px]">
              <span className="flex-1 pt-px">Cubic</span>
              <div className="flex h-full w-[17px] items-center justify-center bg-[#616161]"><DownTri className="text-[#ccc]" /></div>
            </div>
          </div>
          <div className="mt-[8px] flex h-[21px] items-center pl-[14px]">
            <span className="w-[84px] pb-[4px]">Fill Target</span>
            <div className="flex h-[21px] w-[268px] items-center justify-end border border-[#616161] bg-[#434343] pr-[4px]"><DownTri className="text-[#606060]" /></div>
          </div>
        </Group>
        <Heading className="mt-[23px]">Smooth</Heading>
        <div className="mt-[10px] ml-[16px] flex h-[34px] leading-[13px]">
          <Btn className="w-[121px]">Smooth<br />Selection</Btn>
          <Btn className="ml-[10px] w-[118px]">Smooth<br />Track</Btn>
          <Btn className="ml-[9px] w-[122px]">Smooth<br />All Tracks</Btn>
        </div>
        <Group title="Filter Cutoff Frequency" className="mt-[20px] h-[44px] w-[377px]">
          <div className="mt-[11px] flex items-center pl-[19px]">
            <span className="w-[87px] pb-[4px]">Max. Freq (Hz)</span>
            <Spin value="6" split className="w-[260px]" />
          </div>
        </Group>
        <Heading className="mt-[27px]">Swap Fix</Heading>
        <div className="mt-[11px] ml-[18px] flex h-[22px] gap-[6px]">
          <Btn className="w-[185px]">Find Previous</Btn>
          <Btn className="w-[186px]">Find Next</Btn>
        </div>
        <Group title="Markers to Swap" className="mt-[14px] h-[74px] w-[378px]">
          <div className="mt-[16px] flex items-center pl-[12px]">
            <span className="w-[49px]">Marker 1</span>
            <div className="flex h-[19px] w-[300px] items-center border border-black pt-px pl-[5px] text-[#858585]">(too many selected)</div>
          </div>
          <div className="mt-[6px] flex items-center pl-[12px]">
            <span className="w-[49px]">Marker 2</span>
            <div className="flex h-[19px] w-[300px] items-center border border-black pt-px pl-[5px] text-[#858585]">(too many selected)</div>
          </div>
        </Group>
        <div className="mt-[12px] ml-[18px] flex h-[22px] w-[377px] items-center justify-center bg-[#4b4b4b] pt-px text-[#979797]">Apply Swap</div>
      </div>
    </section>
  );
}

/* ---------- transport ---------- */

const marks = [
  { x: 378, t: "1000" }, { x: 758, t: "2000" }, { x: 1138, t: "3000" }, { x: 1518, t: "4000" }, { x: 1897, t: "5000" },
];

function Transport() {
  return (
    <section className="mx-1 mt-[4px] h-[72px] shrink-0 border-b border-[#777] bg-[#2d2d2d] font-['Lato',sans-serif]">
      <div className="h-[24px] border-t border-black bg-[#232323]">
        <svg width="1910" height="23" viewBox="-3 0 1910 23" className="block font-['Open_Sans',sans-serif]">
          {marks.map((m) => (
            <g key={m.t}>
              <path d={`M${m.x + .5} 2V22`} stroke="#5a5a5a" strokeDasharray="1 3" />
              <text x={m.x - 5} y="9.500" textAnchor="end" fontSize="11" letterSpacing="-.4" fill="#ccc">{m.t}</text>
            </g>
          ))}
          <path d="M0 13.500H1907" stroke="#18a818" />
          <path d="M.5 1V22" stroke="#ddd" />
        </svg>
      </div>
      <div className="flex h-[46px] items-center border-b-2 border-[#141414] pt-px pl-[17px] text-[13px] text-[#e8e8e8]">
        <div className="flex h-[22px] w-[100px] overflow-hidden rounded-[2px] border border-[#00e6f5] text-[11.500px]">
          <span className="flex w-[49px] items-center justify-center pr-[2px] text-[#00e6f5]">LIVE</span>
          <span className="flex flex-1 items-center justify-center bg-[#00e6ff] pr-px text-[#1f3a40]">EDIT</span>
        </div>
        <span className="ml-[241px] w-[88px] text-[#8a8a8a]">Take Name:</span>
        <span className="w-[155px] tracking-[-0.05px]">mono_april_random_1</span>
        <svg width="166" height="24" viewBox="605 999 166 24" fill="#fff" className="shrink-0">
          <path d="M605 1005h2.500v12H605zM618 1005v12l-10-6zM630 1005v12l-12-6zM646 1005h2.500v12H646zM660 1005v12l-11-6zM679 999l21 12-21 12zM716 1005v12l11-6zM727.500 1005h2.500v12h-2.500zM745 1005v12l11-6zM756 1005v12l11-6zM767.500 1005h2.500v12h-2.500z" />
        </svg>
        <span className="ml-[63px] w-[188px] shrink-0 pt-px font-['Open_Sans',sans-serif] text-[28px] font-normal tracking-[-0.02px] text-white">00:00:00:000</span>
        <span className="w-[97px] shrink-0 pt-px font-['Open_Sans',sans-serif] text-[28px] font-normal text-white">0000</span>
        <span className="w-[54px] text-[12px] tracking-[-0.4px]">LOOP</span>
        <span className="w-[68px] text-[12px] tracking-[-0.6px] text-[#8a8a8a]">REVERSE</span>
        <div className="flex h-[21px] w-[65px] items-center overflow-hidden rounded-[2px] border border-black bg-black pl-[6px]">
          <span className="flex-1">100%</span>
          <div className="flex h-full w-[14px] items-center justify-center bg-[#333]"><svg width="8" height="5" viewBox="0 0 8 5" fill="none" stroke="#aaa"><path d="M0 .500l4 4 4-4" /></svg></div>
        </div>
        <div className="ml-[13px] flex h-[21px] w-[55px] items-center justify-center rounded-[2px] bg-[#222] pr-px">0</div>
        <svg width="15" height="16" viewBox="0 0 15 16" className="mx-[10px]" fill="#a0a0a0"><path d="M2.500 0h3v2h4V0h3l1 5 1.500 7H9V7H6v5H0l1.500-7zM0 13h6v3H0zM9 13h6v3H9z" /></svg>
        <div className="flex h-[21px] w-[55px] items-center justify-center rounded-[2px] bg-[#222]">5023</div>
        <span className="ml-auto text-[#8a8a8a]">Data</span>
        <svg width="55" height="14" viewBox="0 0 55 14" fill="none" className="ml-[6px]"><path d="M0 11h20l4-2 4-6h3l1 8h19" stroke="#00d7e6" strokeWidth="1.500" /><circle cx="52" cy="11" r="1.700" stroke="#eee" /></svg>
        <span className="ml-[5px] w-[60px]">0.0 KB/s</span>
        <svg width="7" height="11" viewBox="0 0 7 11" fill="none" stroke="#6d6d6d"><path d="M.5 4 3.500 1l3 3M.5 7l3 3 3-3" /></svg>
        <svg width="13" height="14" viewBox="0 0 13 14" fill="none" stroke="#8a8a8a" className="mr-[16px] ml-[11px]"><path d="M.5 11.500h12L11 9V5.500a4.500 4.500 0 0 0-9 0V9zM5 12.500c.5 1.200 2.500 1.200 3 0M6.500 0v1" /></svg>
      </div>
    </section>
  );
}

/* ---------- taskbar ---------- */

function TaskApp({ children, run = false, active = false }: Kids & { run?: boolean; active?: boolean }) {
  return (
    <div className={"flex h-full w-[49px] shrink-0 flex-col items-center " + (active ? "bg-[#f3f3f3]" : "")}>
      <div className="flex h-[38px] items-center">{children}</div>
      {run && <i className={"h-[2px] bg-[#0078d7] " + (active ? "w-full" : "w-[40px]")} />}
    </div>
  );
}

function Taskbar() {
  return (
    <footer className="mt-[4px] flex h-[40px] shrink-0 bg-[#dedede] text-[#1a1a1a]">
      <div className="flex w-[49px] items-center pl-[15px]"><svg width="17" height="17" viewBox="0 0 17 17"><path d="M0 2.400 7 1.400V8H0zM8 1.200 17 0v8H8zM0 9h7v6.600L0 14.600zM8 9h9v8l-9-1.200z" /></svg></div>
      <div className="relative my-px flex w-[287px] items-center overflow-hidden bg-[#fefefe] pl-[11px]">
        <svg width="16" height="16" viewBox="0 0 16 16" fill="none" stroke="#222" strokeWidth="1.300"><circle cx="10" cy="6" r="5" /><path d="M6.500 9.500.5 15.500" /></svg>
        <span className="ml-[12px] pt-px text-[14.500px] tracking-[-0.3px] whitespace-nowrap">Type here to search</span>
        <svg width="78" height="38" viewBox="0 0 78 38" className="absolute right-0 bottom-0">
          <path d="M10 28h58l10 5v5H0v-4z" fill="#d9b38a" />
          <path d="M0 34h78v4H0z" fill="#b98a5e" />
          <path d="M11 13l14 3 13-4 1 15-13 5-12 1z" fill="#5fae62" />
          <path d="M12 10c5-1 8 0 12 2 4-3 8-4 13-3l2 16c-5 0-9 1-13 5-4-2-8-3-12-2z" fill="#eef3f7" />
          <path d="M24 12l2 17M15 14l6 1M16 18l6 1M17 22l6 1M28 15l7-2M28 19l8-2" stroke="#8c9aa5" strokeWidth="1" />
          <path d="M35 5l4 2-8 13-4 2 1-5z" fill="#f7b731" /><path d="M35 5l4 2 1-3-3-2z" fill="#f0737a" />
          <path d="M51 7c0-8 9-8 9 0" fill="none" stroke="#0b62c4" strokeWidth="2" />
          <path d="M47 12c0-10 18-10 18 0v16c0 3-18 3-18 0z" fill="#1583ee" />
          <rect x="49" y="18" width="14" height="10" rx="3" fill="#0b62c4" /><path d="M51 10h10v4H51z" fill="#55b4ff" />
        </svg>
      </div>
      <div className="flex pl-px">
        <TaskApp><svg width="17" height="17" viewBox="0 0 17 17" fill="none" stroke="#222" strokeWidth="1.500"><path d="M1 0v3h9V0M1 17v-3h9v3M1 5.500h9v6H1zM14.500 0v4M14.500 8v9" /><path d="M13 4.500h3v3h-3z" fill="#222" stroke="none" /></svg></TaskApp>
        <TaskApp>
          <svg width="25" height="22" viewBox="0 0 25 22">
            <defs>
              <linearGradient id="cpl" x1="0" y1="0" x2="0" y2="1"><stop offset="0" stopColor="#1b7fe8" /><stop offset=".5" stopColor="#2fb59a" /><stop offset="1" stopColor="#e8cf3c" /></linearGradient>
              <linearGradient id="cpr" x1="0" y1="0" x2="0" y2="1"><stop offset="0" stopColor="#9a5be8" /><stop offset=".5" stopColor="#e8588f" /><stop offset="1" stopColor="#f59a4a" /></linearGradient>
            </defs>
            <path d="M8 1h8c2 0 2.500 1 3 2.500L20 6h-4c-2 0-3 1-3.500 2.500L10 15c-.5 1-1.500 1.500-3 1.500H4c-3 0-4-2-3-5l2-7c.7-2 2-3.500 5-3.500z" fill="url(#cpl)" />
            <path d="M17 21H9c-2 0-2.500-1-3-2.500L5.300 16.500H8c2 0 3.500-1 4-2.500L14.500 7.500c.5-1 1.500-1.500 3-1.500H21c3 0 4 2 3 5l-2 6.500c-.7 2-2 3.500-5 3.500z" fill="url(#cpr)" />
          </svg>
        </TaskApp>
        <TaskApp><div className="flex size-6 items-center justify-center bg-[#ececec]"><svg width="16" height="16" viewBox="0 0 16 16"><path d="M4.500 1A8 8 0 1 0 15.500 11.500C9 13.500 3 8.500 4.500 1z" fill="#555" /></svg></div></TaskApp>
        <TaskApp run><svg width="22" height="20" viewBox="0 0 22 20"><path d="M0 1h8l2 2h12v16H0z" fill="#e9a923" /><path d="M0 5h22v14H0z" fill="#ffd768" /><path d="M4 12h14v8h-4v-4H8v4H4z" fill="#2f8fe0" /></svg></TaskApp>
        <TaskApp><svg width="22" height="23" viewBox="0 0 22 23"><path d="M10 0h2l6 18H4z" fill="#f57c00" /><path d="M8.500 5h5l1.300 4H7.200zM6 13h10l1.200 4H4.800z" fill="#f5f5f5" /><path d="M2 17h18l2 6H0z" fill="#ef6c00" /></svg></TaskApp>
        <TaskApp run><svg width="24" height="24" viewBox="0 0 24 24"><path d="M17 0l7 3v18l-7 3L6.500 14 2.500 17 0 15.500 4 12 0 8.500 2.500 7l4 3zm0 7-6 5 6 5z" fill="#1f8ad2" /><path d="M17 0l7 3v18l-7 3z" fill="#3aa5ea" /></svg></TaskApp>
        <TaskApp run><svg width="24" height="24" viewBox="0 0 24 24"><circle cx="12" cy="13" r="11" fill="#ff7139" /><path d="M15 0c1 4 8 5 8 13a11 11 0 0 1-11 11C20 20 20 8 15 0z" fill="#ffc53a" /><path d="M2 5c2 2 4 2 6 2l-4 5z" fill="#ff9a2e" /><circle cx="12" cy="13" r="5.500" fill="#7542e5" /><path d="M7 10c3-2 6 0 8 2-3 0-4 3-7 3z" fill="#ff9640" /><path d="M1 13a11 11 0 0 0 20 6c-6 4-14 4-20-6z" fill="#e6336b" /></svg></TaskApp>
        <TaskApp run><svg width="23" height="22" viewBox="0 0 23 22"><path d="M8 1h13l-6 18H2z" fill="#9fd0d8" /><path d="M21 1l1 3-5 17-15-1v-1h13z" fill="#5b6e78" /><path d="M9 1h12l-.6 2H8.400z" fill="#d9eef0" /></svg></TaskApp>
        <TaskApp run><div className="flex size-6 items-center justify-center rounded-full bg-white"><svg width="14" height="16" viewBox="0 0 14 16" fill="none"><path d="M7 3 2.500 14M7 3l4.500 11" stroke="#3b82f6" strokeWidth="2.500" /><path d="M1 9c3 3 9 3 12 0" stroke="#1b64c8" strokeWidth="1.800" /><circle cx="7" cy="3.500" r="2.500" fill="#174ea6" /></svg></div></TaskApp>
        <TaskApp run active><MotiveLogo s={24} /></TaskApp>
      </div>
      <div className="ml-auto flex items-center text-[14px] whitespace-nowrap">
        <svg width="20" height="20" viewBox="0 0 20 20" className="mr-[39px]"><circle cx="10" cy="10" r="9" fill="#1296db" stroke="#fff" strokeWidth="1.500" /><text x="10" y="15" textAnchor="middle" fontFamily="Open Sans" fontWeight="700" fontSize="14" fill="#fff">?</text></svg>
        <svg width="27" height="26" viewBox="0 0 27 26"><path d="M6 24a6 6 0 0 1 0-11 7 7 0 0 1 12-2 6.500 6.500 0 0 1 3 13z" fill="#a9c6f5" /><path d="M6 24a5 5 0 0 1 1-9c4-2 8 1 9 4 5-1 6 3 4 5z" fill="#d3e3fb" /><circle cx="20" cy="7" r="6.500" fill="#c42b1c" /><text x="20" y="11" textAnchor="middle" fontSize="10" fontFamily="Open Sans" fill="#fff">1</text></svg>
        <span className="ml-[7px] w-[38px] tracking-[-0.45px]">30°C</span>
        <span className="w-[111px] tracking-[-0.4px]">Mostly cloudy</span>
        <svg width="12" height="7" viewBox="0 0 12 7" fill="none" stroke="#222" strokeWidth="1.300"><path d="M.5 6.500 6 1l5.500 5.500" /></svg>
        <svg width="13" height="18" viewBox="0 0 13 18" fill="none" stroke="#222" strokeWidth="1.200" className="ml-[12px]"><rect x="1" y="4.500" width="8" height="9" rx="1.500" /><path d="M9 8l3-2v6l-3-2M2 2.500C4 .5 8 .5 10 2.500M2 15.500c2 2 6 2 8 0" /></svg>
        <svg width="14" height="14" viewBox="0 0 14 14" fill="none" stroke="#333" strokeWidth="1.200" className="ml-[11px]"><path d="M1 13.500C1 6 6 1 13.500 1M4 13.500C4 8 8 4 13.500 4M7 13.500C7 9.500 9.500 7 13.500 7" /><circle cx="11.500" cy="12" r="1.500" fill="#222" /></svg>
        <svg width="16" height="12" viewBox="0 0 16 12" fill="none" stroke="#222" strokeWidth="1.200" className="ml-[8px]"><path d="M.6 4h2.500L7 .8v10.400L3.100 8H.6zM10 3.500l5 5M15 3.500l-5 5" /></svg>
        <span className="ml-[11px] w-[30px] text-[12px] tracking-[-0.4px]">ENG</span>
        <div className="w-[68px] text-center text-[12px] leading-[18px] tracking-[-0.45px]"><div>10:45 AM</div><div>27-08-2024</div></div>
        <svg width="17" height="17" viewBox="0 0 17 17" className="mr-[24px] ml-[14px]"><path d="M0 0h15v14h-4l-3 3v-3H0z" fill="#111" /><path d="M3 4h9M3 7h9M3 10h5" stroke="#ddd" strokeWidth="1.200" /><path d="M12 9a3.500 3.500 0 1 0 4 4.500A4 4 0 0 1 12 9z" fill="#111" stroke="#ddd" strokeWidth=".8" /></svg>
      </div>
    </footer>
  );
}

export default function App() {
  return (
    <div className="flex h-[1080px] w-[1920px] flex-col overflow-hidden bg-[#444] font-['Open_Sans','Noto_Sans',sans-serif] leading-normal">
      <TitleBar />
      <MenuBar />
      <MainToolbar />
      <main className="mt-[4px] flex h-[881px] shrink-0 gap-1 px-1">
        <div className="flex w-[326px] flex-col">
          <AssetsPanel />
          <DataPanel />
        </div>
        <div className="flex w-[1172px] flex-col">
          <PerspectiveView />
          <GraphView />
        </div>
        <EditTools />
      </main>
      <Transport />
      <Taskbar />
    </div>
  );
}
